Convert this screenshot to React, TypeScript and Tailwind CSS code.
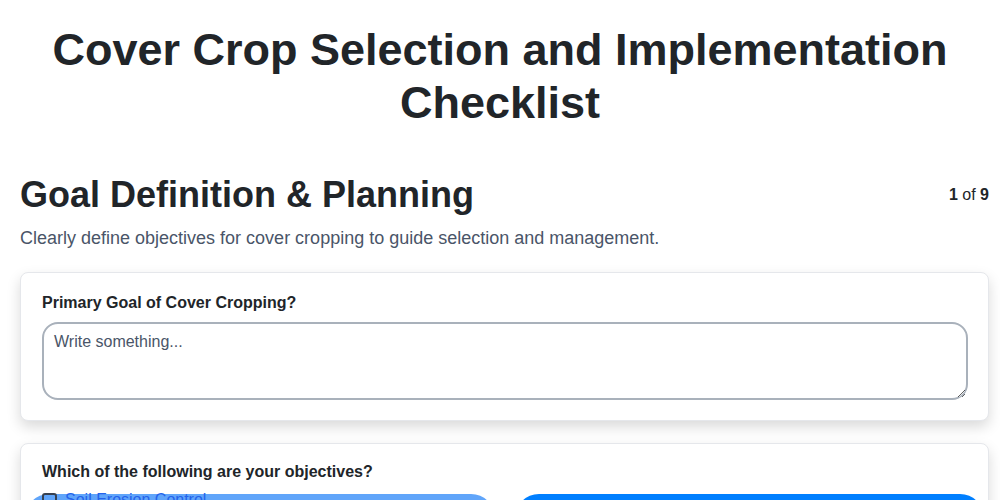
import { useState } from "react";

const objectives = ["Soil Erosion Control", "Nitrogen Fixation"];

export default function App() {
  const [goal, setGoal] = useState("");
  const [picked, setPicked] = useState<string[]>([]);
  const toggle = (o: string) =>
    setPicked(p => (p.includes(o) ? p.filter(x => x !== o) : [...p, o]));

  return (
    <div className="min-h-screen bg-white text-[#212529] font-['Liberation_Sans',Arial,sans-serif]">
      <h1 className="pt-[23px] text-center text-[45px] leading-[53px] font-bold px-10">
        Cover Crop Selection and Implementation Checklist
      </h1>

      <div className="pl-5 pr-[11px] mt-[44px]">
        <div className="flex items-center justify-between">
          <h2 className="text-[36px] leading-[44px] font-bold">Goal Definition &amp; Planning</h2>
          <div className="text-[16px]">
            <span className="font-bold">1</span> of <span className="font-bold">9</span>
          </div>
        </div>
        <p className="mt-[10px] text-[18px] leading-[22px] text-[#4a5568]">
          Clearly define objectives for cover cropping to guide selection and management.
        </p>

        <div className="mt-[23px] flex flex-col gap-[22px]">
          <div className="rounded-lg border border-[#e5e7eb] bg-white shadow-[0_6px_14px_rgba(0,0,0,0.15)] pl-[21px] pr-5 pt-[20px] pb-[20px]">
            <label className="block text-[16px] leading-[19px] font-bold">Primary Goal of Cover Cropping?</label>
            <textarea
              value={goal}
              onChange={e => setGoal(e.target.value)}
              placeholder="Write something..."
              className="mt-[10px] block w-full h-[78px] rounded-2xl border-2 border-[#a9b1bb] px-[10px] py-[8px] text-[16px] leading-[20px] outline-none placeholder:text-[#4a5568]"
            />
          </div>

          <div className="rounded-lg border border-[#e5e7eb] bg-white shadow-[0_6px_14px_rgba(0,0,0,0.15)] pl-[21px] pr-5 pt-[18px] pb-[20px]">
            <div className="text-[16px] leading-[19px] font-bold">Which of the following are your objectives?</div>
            <label className="relative z-10 mt-[10px] flex items-center gap-[8px] text-[16px] leading-[18px] text-[#2563eb]">
              <input
                type="checkbox"
                checked={picked.includes(objectives[0])}
                onChange={() => toggle(objectives[0])}
                className="h-[15px] w-[15px] appearance-none rounded-[3px] border-2 border-[#374151] bg-transparent"
              />
              Soil Erosion Control
            </label>
            <div className="-mt-[15px] -ml-[17px] -mr-[16px] grid grid-cols-2 gap-5">
              <button className="h-[48px] rounded-full bg-[#60a5fa]" onClick={() => toggle(objectives[0])} />
              <button className="h-[48px] rounded-full bg-[#007fff]" onClick={() => toggle(objectives[1])} />
            </div>
          </div>
        </div>
      </div>
    </div>
  );
}
